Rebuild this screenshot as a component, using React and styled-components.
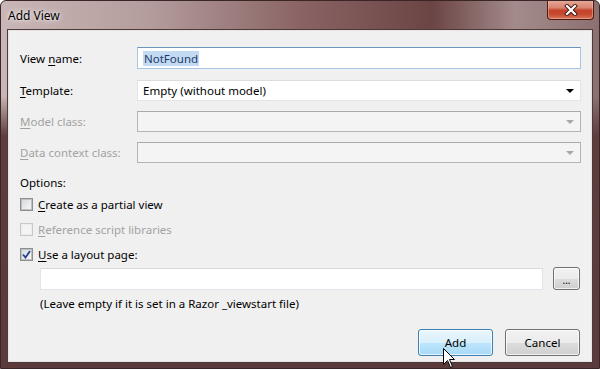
import styled, { createGlobalStyle, css } from "styled-components";

const GlobalStyle = createGlobalStyle`
  html, body {
    margin: 0;
    padding: 0;
    background: #ffffff;
  }
  body {
    font-family: "Noto Sans", "Open Sans", sans-serif;
    font-size: 11.5px;
  }
`;

const Window = styled.div`
  position: relative;
  box-sizing: border-box;
  width: 600px;
  height: 369px;
  display: flex;
  flex-direction: column;
  border: 1px solid #3a2626;
  border-radius: 6px 6px 0 0;
  padding: 0 6px 5px 6px;
  overflow: hidden;
  background:
    linear-gradient(180deg, rgba(94, 60, 60, 0) 0px, rgba(94, 60, 60, 0) 95px, #5e3d3d 135px, #5a3a3a 100%),
    linear-gradient(90deg, #c9b6b6 0%, #b49c9c 25%, #8a6464 50%, #6b4444 72%, #a48b8b 86%, #8c7070 100%);
`;

const TitleBar = styled.div`
  height: 28px;
  display: flex;
  align-items: center;
  justify-content: space-between;
  padding-left: 1px;
`;

const Title = styled.span`
  font-size: 12px;
  color: #000;
  text-shadow: 0 0 6px rgba(255, 255, 255, 0.9), 0 0 3px rgba(255, 255, 255, 0.8);
`;

const CloseButton = styled.div`
  align-self: flex-start;
  width: 45px;
  height: 19px;
  margin-right: -1px;
  margin-top: -1px;
  display: flex;
  align-items: center;
  justify-content: center;
  border: 1px solid #4a1c14;
  border-top: none;
  border-radius: 0 0 4px 4px;
  box-shadow: inset 0 0 0 1px rgba(255, 200, 180, 0.45);
  background: linear-gradient(180deg, #e9ab9b 0%, #d88470 40%, #c5432a 55%, #c64a30 75%, #d8765a 100%);
`;

const Client = styled.div`
  flex: 1;
  display: flex;
  flex-direction: column;
  background: #f0f0f0;
  border: 1px solid #4d3a3a;
  box-shadow: inset 0 0 0 1px #e8e4e4;
  padding: 17px 11px 6px 12px;
`;

const FieldRow = styled.div`
  display: grid;
  grid-template-columns: 117px 1fr;
  align-items: center;
  margin-bottom: ${(p) => p.$gap ?? 10}px;
`;

const Label = styled.span`
  color: ${(p) => (p.$disabled ? "#a2a2a2" : "#000")};
  white-space: nowrap;
`;

const Key = styled.span`
  text-decoration: underline;
  text-underline-offset: 2px;
`;

const TextBox = styled.div`
  box-sizing: border-box;
  height: 22px;
  display: flex;
  align-items: center;
  padding-left: 5px;
  background: #fff;
  border: 1px solid #a8c6e2;
  border-top-color: #6d94bb;
  ${(p) =>
    p.$plain &&
    css`
      border-color: #e2e3ea;
      border-top-color: #d7d9df;
    `}
`;

const Selected = styled.span`
  background: #c3dbf2;
  color: #1c3a6a;
  padding: 0 1px;
`;

const Combo = styled.div`
  box-sizing: border-box;
  height: 21px;
  display: flex;
  align-items: center;
  justify-content: space-between;
  padding: 0 6px 0 5px;
  background: ${(p) => (p.$disabled ? "#f4f4f4" : "#fff")};
  border: 1px solid ${(p) => (p.$disabled ? "#b4b4b4" : "#e4e4e4")};
  border-top-color: ${(p) => (p.$disabled ? "#a9a9a9" : "#dddddd")};
  color: #000;
`;

const Arrow = styled.span`
  width: 0;
  height: 0;
  border-left: 4px solid transparent;
  border-right: 4px solid transparent;
  border-top: 4px solid ${(p) => (p.$disabled ? "#a8a8a8" : "#000")};
  margin-top: 1px;
`;

const OptionsLabel = styled.div`
  margin-top: 12px;
  line-height: 16px;
  margin-bottom: 5px;
`;

const CheckRow = styled.label`
  display: flex;
  align-items: center;
  gap: 5px;
  height: 17px;
  margin-bottom: 8px;
  color: ${(p) => (p.$disabled ? "#a2a2a2" : "#000")};
`;

const Box = styled.span`
  box-sizing: border-box;
  width: 13px;
  height: 13px;
  display: flex;
  align-items: center;
  justify-content: center;
  border: 1px solid ${(p) => (p.$disabled ? "#c8c8c8" : "#8e8f8f")};
  background: ${(p) => (p.$disabled ? "#f4f4f4" : "#fff")};
  box-shadow: inset 0 0 0 1px ${(p) => (p.$disabled ? "#ececec" : "#bcbfc4")};
  ${(p) =>
    !p.$disabled &&
    css`
      background: linear-gradient(135deg, #d4d6d9 0%, #eaebec 55%, #fbfbfb 100%);
    `}
`;

const LayoutRow = styled.div`
  display: flex;
  align-items: center;
  gap: 10px;
  padding-left: 20px;
  margin-top: -4px;
  padding-right: 1px;
`;

const LayoutInput = styled(TextBox)`
  flex: 1;
`;

const SmallButton = styled.div`
  box-sizing: border-box;
  width: 27px;
  height: 23px;
  border: 1px solid #707070;
  border-radius: 3px;
  display: flex;
  align-items: flex-end;
  justify-content: center;
  padding-bottom: 5px;
  font-size: 10px;
  line-height: 8px;
  background: linear-gradient(180deg, #f2f2f2 0%, #ebebeb 50%, #dddddd 51%, #cfcfcf 100%);
  box-shadow: inset 0 0 0 1px rgba(255, 255, 255, 0.7);
`;

const Note = styled.div`
  padding-left: 20px;
  margin-top: 6px;
  line-height: 16px;
`;

const ButtonRow = styled.div`
  margin-top: auto;
  display: flex;
  justify-content: flex-end;
  gap: 12px;
  padding-right: 1px;
`;

const Button = styled.div`
  position: relative;
  box-sizing: border-box;
  width: 75px;
  height: 27px;
  display: flex;
  align-items: center;
  justify-content: center;
  border-radius: 3px;
  border: 1px solid ${(p) => (p.$default ? "#3c7fb1" : "#707070")};
  background: ${(p) =>
    p.$default
      ? "linear-gradient(180deg, #eaf6fd 0%, #d9f0fc 50%, #bee6fd 51%, #a7d9f5 100%)"
      : "linear-gradient(180deg, #f2f2f2 0%, #ebebeb 50%, #dddddd 51%, #cfcfcf 100%)"};
  box-shadow: inset 0 0 0 1px rgba(255, 255, 255, 0.75);
  color: #000;
`;

const Cursor = styled.svg`
  position: absolute;
  left: 442px;
  top: 347px;
`;

const CheckOption = ({ disabled, checked, k, rest }) => (
  <CheckRow $disabled={disabled}>
    <Box $disabled={disabled}>
      {checked && (
        <svg width="9" height="9" viewBox="0 0 9 9">
          <path d="M1 4.5 L3.5 7.5 L8 1" fill="none" stroke="#27408b" strokeWidth="1.8" />
        </svg>
      )}
    </Box>
    <span>
      <Key>{k}</Key>
      {rest}
    </span>
  </CheckRow>
);

export default function App() {
  return (
    <>
      <GlobalStyle />
      <Window>
        <TitleBar>
          <Title>Add View</Title>
          <CloseButton>
            <svg width="14" height="12" viewBox="0 0 14 12">
              <path d="M3 2 L11 10 M11 2 L3 10" stroke="#3a1510" strokeWidth="4" strokeLinecap="square" />
              <path d="M3 2 L11 10 M11 2 L3 10" stroke="#ffffff" strokeWidth="2.2" strokeLinecap="square" />
            </svg>
          </CloseButton>
        </TitleBar>
        <Client>
          <FieldRow $gap={11}>
            <Label>
              View <Key>n</Key>ame:
            </Label>
            <TextBox>
              <Selected>NotFound</Selected>
            </TextBox>
          </FieldRow>
          <FieldRow>
            <Label>
              <Key>T</Key>emplate:
            </Label>
            <Combo>
              <span>Empty (without model)</span>
              <Arrow />
            </Combo>
          </FieldRow>
          <FieldRow>
            <Label $disabled>
              <Key>M</Key>odel class:
            </Label>
            <Combo $disabled>
              <span />
              <Arrow $disabled />
            </Combo>
          </FieldRow>
          <FieldRow $gap={0}>
            <Label $disabled>
              <Key>D</Key>ata context class:
            </Label>
            <Combo $disabled>
              <span />
              <Arrow $disabled />
            </Combo>
          </FieldRow>
          <OptionsLabel>Options:</OptionsLabel>
          <CheckOption k="C" rest="reate as a partial view" />
          <CheckOption disabled k="R" rest="eference script libraries" />
          <CheckOption checked k="U" rest="se a layout page:" />
          <LayoutRow>
            <LayoutInput $plain />
            <SmallButton>...</SmallButton>
          </LayoutRow>
          <Note>(Leave empty if it is set in a Razor _viewstart file)</Note>
          <ButtonRow>
            <Button $default>Add</Button>
            <Button>Cancel</Button>
          </ButtonRow>
        </Client>
        <Cursor width="13" height="21" viewBox="0 0 13 21">
          <path d="M0.5 0.5 L0.5 16.5 L4.5 12.5 L7.5 19.5 L9.5 18.5 L6.5 11.5 L11.5 11.5 Z" fill="#fff" stroke="#000" strokeWidth="1" />
        </Cursor>
      </Window>
    </>
  );
}
